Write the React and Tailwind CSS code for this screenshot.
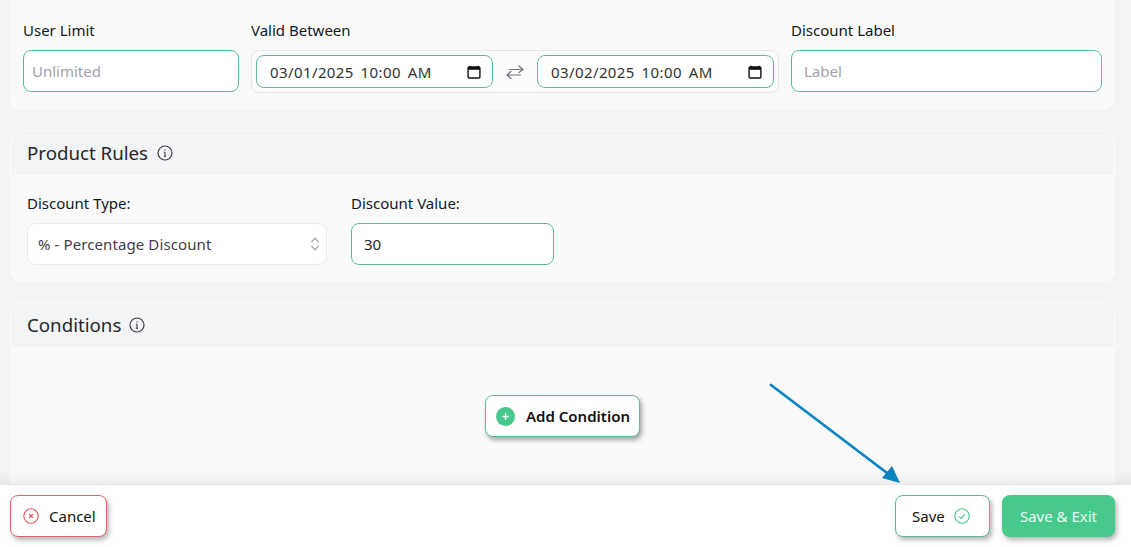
import React from "react";

function Info() {
  return (
    <svg viewBox="0 0 16 16" className="w-[16px] h-[16px] shrink-0" fill="none" stroke="#3f3f46" strokeWidth="1.2">
      <circle cx="8" cy="8" r="7" />
      <path d="M8 7.2v4M6.9 7.2H8M6.9 11.2h2.2" strokeWidth="1.1" />
      <circle cx="8" cy="4.9" r="0.7" fill="#3f3f46" stroke="none" />
    </svg>
  );
}

function Calendar() {
  return (
    <svg viewBox="0 0 14 14" className="w-[14px] h-[14px] shrink-0">
      <path d="M3 .8v1.4M11 .8v1.4" stroke="#111" strokeWidth="1.4" />
      <rect x="1.1" y="2" width="11.8" height="11" rx="1" fill="none" stroke="#111" strokeWidth="1.4" />
      <rect x="1.1" y="2" width="11.8" height="2.8" fill="#111" />
    </svg>
  );
}

function DateBox({ text, width }) {
  return (
    <div className={`${width} h-[33px] rounded-lg border border-[#5dbb94] bg-white flex items-center justify-between pl-[13px] pr-[11px] text-[15px] text-[#333] tracking-[0.4px] [word-spacing:2.5px]`}>
      <span className="whitespace-pre pt-[1px]">{text}</span>
      <Calendar />
    </div>
  );
}

function Swap() {
  return (
    <svg viewBox="0 0 18 14" className="w-[18px] h-[14px] shrink-0" fill="none" stroke="#71717a" strokeWidth="1.2" strokeLinecap="round" strokeLinejoin="round">
      <path d="M3.5 4.5H17M13 1l4 3.5-4 3M14.5 10H1M5 6.5 1 10l4 3.5" />
    </svg>
  );
}

export default function App() {
  return (
    <div className="w-[1131px] h-[547px] overflow-hidden flex flex-col bg-[#f3f4f6] font-['Noto_Sans',sans-serif] text-[15px] text-[#1f2937]">
      <main className="h-[484px] shrink-0 overflow-hidden pl-[10px] pr-[16px] flex flex-col gap-[20px] relative">
        <section className="h-[110px] shrink-0 rounded-b-xl bg-[#fafafa] border-b border-x border-[#fbfbfb] pt-[20px] pl-[12px] pr-[13px] flex gap-[12px]">
          <div className="w-[216px] shrink-0">
            <div className="h-[20px] leading-[20px] mb-[10px] text-[#111827]">User Limit</div>
            <div className="h-[42px] rounded-lg border border-[#5dbb94] bg-white flex items-center px-[8px] text-[#a1a1aa]">Unlimited</div>
          </div>
          <div className="w-[528px] shrink-0">
            <div className="h-[20px] leading-[20px] mb-[10px] text-[#111827]">Valid Between</div>
            <div className="h-[43px] rounded-lg border border-[#e5e7eb] bg-[#fcfcfd] flex items-center px-[4px] justify-between">
              <DateBox text="03/01/2025 10:00 AM" width="w-[237px]" />
              <Swap />
              <DateBox text="03/02/2025 10:00 AM" width="w-[237px]" />
            </div>
          </div>
          <div className="w-[311px] shrink-0">
            <div className="h-[20px] leading-[20px] mb-[10px] text-[#111827]">Discount Label</div>
            <div className="h-[42px] rounded-lg border border-[#5dbb94] bg-white flex items-center px-[12px] text-[#a1a1aa]">Label</div>
          </div>
        </section>

        <section className="h-[152px] shrink-0 rounded-xl bg-[#fafafa] border border-[#fbfbfb] overflow-hidden">
          <header className="h-[44px] bg-[#f3f4f6] flex items-center pl-[16px] gap-[9px]">
            <h2 className="text-[18.7px] text-[#27272a] pt-[1px]">Product Rules</h2>
            <Info />
          </header>
          <div className="flex pl-[16px] pt-[18px] gap-[24px]">
            <div className="w-[300px]">
              <div className="h-[20px] leading-[20px] mb-[10px] text-[#111827]">Discount Type:</div>
              <div className="h-[42px] rounded-lg border border-[#ececef] bg-white flex items-center justify-between pl-[10px] pr-[6px] text-[#3f3f46] tracking-[0.1px]">
                <span>% - Percentage Discount</span>
                <svg viewBox="0 0 10 16" className="w-[10px] h-[16px]" fill="none" stroke="#9ca3af" strokeWidth="1.2">
                  <path d="M1.5 6 5 2.2 8.5 6M1.5 10 5 13.8 8.5 10" />
                </svg>
              </div>
            </div>
            <div className="w-[203px]">
              <div className="h-[20px] leading-[20px] mb-[10px] text-[#111827]">Discount Value:</div>
              <div className="h-[42px] rounded-lg border border-[#5dbb94] bg-white flex items-center px-[12px] text-[#27272a]">30</div>
            </div>
          </div>
        </section>

        <section className="h-[200px] shrink-0 rounded-xl bg-[#fafafa] border border-[#fbfbfb] overflow-hidden">
          <header className="h-[44px] bg-[#f3f4f6] flex items-center pl-[16px] gap-[8px]">
            <h2 className="text-[18.7px] text-[#27272a] pt-[1px]">Conditions</h2>
            <Info />
          </header>
          <div className="flex justify-center pt-[48px]">
            <button className="h-[42px] w-[155px] rounded-lg border border-[#5dbb94] bg-white flex items-center pl-[10px] gap-[11px] font-semibold text-[15px] text-[#111] shadow-[2px_3px_5px_rgba(0,0,0,0.35)]">
              <span className="w-[19px] h-[19px] rounded-full bg-[#47c98c] flex items-center justify-center">
                <svg viewBox="0 0 10 10" className="w-[9px] h-[9px]" stroke="#fff" strokeWidth="1.6"><path d="M5 1.5v7M1.5 5h7" /></svg>
              </span>
              Add Condition
            </button>
          </div>
        </section>

        <div className="absolute left-0 right-0 bottom-0 h-[14px] bg-gradient-to-b from-transparent to-[rgba(0,0,0,0.05)]" />
      </main>

      <footer className="relative flex-1 bg-white border-t border-[#e5e7eb] flex items-center justify-between pl-[10px] pr-[16px] pb-[1px]">
        <button className="h-[42px] w-[97px] rounded-lg border border-[#d9686b] bg-white flex items-center pl-[12px] gap-[10px] text-[#111] shadow-[2px_3px_5px_rgba(0,0,0,0.3)]">
          <svg viewBox="0 0 16 16" className="w-[16px] h-[16px] shrink-0" fill="none" stroke="#e0565b" strokeWidth="1.1">
            <circle cx="8" cy="8" r="7.2" />
            <path d="M6.2 6.2l3.6 3.6M9.8 6.2l-3.6 3.6" strokeWidth="1.3" />
          </svg>
          <span className="pt-[1px]">Cancel</span>
        </button>
        <div className="flex gap-[12px]">
          <button className="h-[42px] w-[95px] rounded-lg border border-[#5dbb94] bg-white flex items-center pl-[16px] gap-[9px] text-[#111] shadow-[2px_3px_5px_rgba(0,0,0,0.3)]">
            <span className="pt-[1px]">Save</span>
            <svg viewBox="0 0 16 16" className="w-[16px] h-[16px] shrink-0" fill="none" stroke="#47c98c" strokeWidth="1.1">
              <circle cx="8" cy="8" r="7.2" />
              <path d="M5.2 8.3l2 2 3.6-4" strokeWidth="1.2" />
            </svg>
          </button>
          <button className="h-[42px] w-[113px] rounded-lg bg-[#47c98c] flex items-center justify-center text-white/90 shadow-[2px_3px_5px_rgba(0,0,0,0.3)]">
            <span className="pt-[1px]">Save &amp; Exit</span>
          </button>
        </div>
        <svg viewBox="0 0 140 110" className="absolute left-[765px] top-[-106px] w-[140px] h-[110px] pointer-events-none">
          <path d="M6 6 126 97" stroke="#0a84c1" strokeWidth="2.8" strokeLinecap="round" />
          <path d="M135 104 117 99 127 87Z" fill="#0a84c1" />
        </svg>
      </footer>
    </div>
  );
}
